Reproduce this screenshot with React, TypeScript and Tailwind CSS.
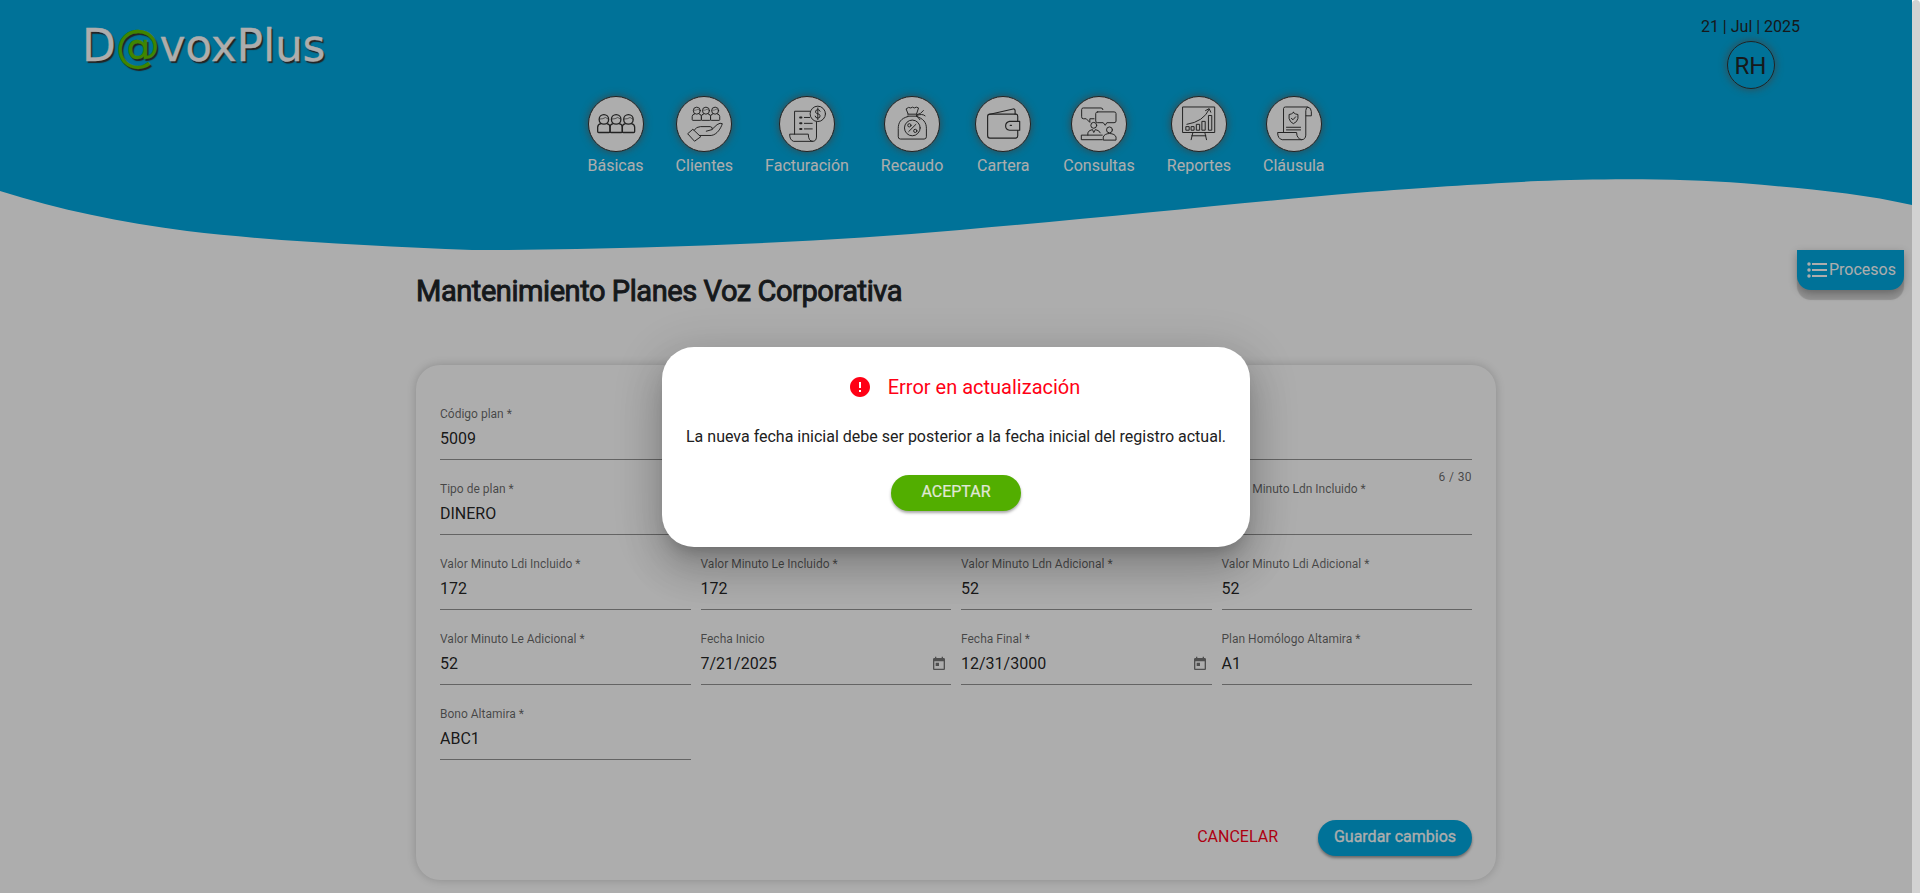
import React from 'react';

type NavEntry = { label: string; icon: React.ReactNode };
type FieldData = { label?: string; value?: string; date?: boolean; span?: string; hint?: string };

function Person({ x, y, s }: { x: number; y: number; s: number }) {
  return (
    <g transform={`translate(${x} ${y}) scale(${s})`}>
      <circle cx="0" cy="-1" r="14.500" />
      <path strokeWidth="2" d="M-13 -2 Q-2 -2 5 -7 L13 -2" />
      <path d="M-9 12 Q-19 14 -19 23 V36 Q-19 39 -16 39 H16 Q19 39 19 36 V23 Q19 14 9 12" />
    </g>
  );
}

const basicas = (
  <g strokeWidth="4">
    <Person x={47} y={71} s={1} />
    <Person x={84.500} y={71} s={1} />
    <Person x={122} y={71} s={1} />
  </g>
);

const clientes = (
  <g>
    <g strokeWidth="4">
      <Person x={62} y={44} s={0.74} />
      <Person x={90} y={44} s={0.74} />
      <Person x={118} y={44} s={0.74} />
    </g>
    <path d="M35 113 L50 100 L74 123 L56 136 Z" />
    <path d="M54 103 Q60 92 73 92 H103 Q112 94 109 101 L91 106" />
    <path d="M110 99 L124 86 Q134 79 140 83 C136 96 124 117 106 119 H70" />
  </g>
);

const facturacion = (
  <g>
    <path d="M46 115 V45 H92" />
    <path d="M113 78 V124 Q112 137 101 137 H43 Q31 133 31 115 H88 Q88 137 101 137" />
    <circle cx="117" cy="53" r="23.500" />
    <path d="M124 45 Q122 40 117 40 Q109 41 110 48 C111 54 124 51 124 59 Q124 66 117 66 Q110 66 109 60 M117 35 V71" />
    <path d="M76 64 H92 M76 82 H100 M76 99 H100" />
    <path strokeWidth="6" d="M63 64 h4 M63 82 h4 M63 99 h4" />
  </g>
);

const recaudo = (
  <g>
    <path d="M72 53 L66 38 Q74 30 80 35 Q86 30 91 35 Q97 30 104 35 L98 53" />
    <path d="M71 54 H98 M71 60 H98 M98 56 Q112 54 119 43 M98 58 Q116 51 124 59 M98 58 L108 71" />
    <path d="M72 61 C49 67 42 80 42 98 V123 Q42 130 49 130 H121 Q128 130 128 123 V97 C128 80 119 67 98 61" />
    <circle cx="85" cy="96" r="24" />
    <path d="M96 85 L74 107" />
    <circle cx="76" cy="88" r="5" />
    <circle cx="94" cy="105" r="5" />
  </g>
);

const cartera = (
  <g strokeWidth="3.500">
    <path d="M41 55 L115 38 Q120 37 121 43 V54" />
    <path d="M129 76 V60 Q129 54 123 54 H44 Q37 54 37 61 V119 Q37 127 44 127 H123 Q129 126 129 120 V104" />
    <path d="M135 76 H104 Q92 79 92 90 Q92 101 104 103 H135 Z" />
    <path d="M106 88 h4" />
  </g>
);

const consultas = (
  <g>
    <path d="M96 40 Q96 35 90 35 H36 Q31 35 31 40 V62 Q31 68 36 68 H45 L56 79 V68 H69" />
    <path d="M80 47 H130 Q136 47 136 52 V75 Q136 80 130 80 H108 L103 88 L97 80 H80 Q74 80 74 75 V52 Q74 47 80 47 Z" />
    <circle cx="68" cy="88" r="9" />
    <path d="M50 118 V111 Q52 103 64 101 L68 110 L73 101 Q85 103 88 111" />
    <circle cx="116" cy="102" r="9" />
    <path d="M97 132 V124 Q100 114 116 113 Q133 114 136 124 V132 Z" />
    <path d="M94 118 H30 V132 H94" />
  </g>
);

const reportes = (
  <g>
    <path d="M35 32 H132 V110 H35 Z" />
    <path d="M45 92 h9 v11 h-9 Z M61 92 h8 v11 h-8 Z M77 85 h9 v18 h-9 Z M94 76 h9 v27 h-9 Z M114 58 h9 v45 h-9 Z" />
    <path d="M47 85 Q98 77 115 39 M104 43 L115 37 L120 48" />
    <path d="M65 111 L60 132 M102 111 L107 132 M62 120 H105" />
  </g>
);

const clausula = (
  <g>
    <path d="M52 109 V37 Q52 32 58 32 H125 Q137 34 137 46 V59 H120 V43 Q121 32 126 32" />
    <path d="M120 59 V118 Q119 132 107 132 H48 Q34 129 34 110 H92 Q92 129 107 132" />
    <path d="M82 49 Q89 55 96 55 V67 Q94 78 82 83 Q71 78 69 67 V55 Q76 55 82 49 Z" />
    <path d="M76 67 L81 71 L89 62" />
    <path d="M61 94 H104 M61 102 H104" />
  </g>
);

const nav: NavEntry[] = [
  { label: 'Básicas', icon: basicas },
  { label: 'Clientes', icon: clientes },
  { label: 'Facturación', icon: facturacion },
  { label: 'Recaudo', icon: recaudo },
  { label: 'Cartera', icon: cartera },
  { label: 'Consultas', icon: consultas },
  { label: 'Reportes', icon: reportes },
  { label: 'Cláusula', icon: clausula },
];

const fields: FieldData[] = [
  { label: 'Código plan *', value: '5009' },
  { span: 'col-span-3', hint: '6 / 30' },
  { label: 'Tipo de plan *', value: 'DINERO' },
  {},
  {},
  { label: 'Valor Minuto Ldn Incluido *' },
  { label: 'Valor Minuto Ldi Incluido *', value: '172' },
  { label: 'Valor Minuto Le Incluido *', value: '172' },
  { label: 'Valor Minuto Ldn Adicional *', value: '52' },
  { label: 'Valor Minuto Ldi Adicional *', value: '52' },
  { label: 'Valor Minuto Le Adicional *', value: '52' },
  { label: 'Fecha Inicio', value: '7/21/2025', date: true },
  { label: 'Fecha Final *', value: '12/31/3000', date: true },
  { label: 'Plan Homólogo Altamira *', value: 'A1' },
  { label: 'Bono Altamira *', value: 'ABC1' },
];

function Field({ label, value, date, span, hint }: FieldData) {
  return (
    <div className={`h-[75px] ${span ?? ''}`}>
      <div className="flex h-[55px] flex-col border-b border-[#949494]">
        <span className="h-5 text-xs leading-[18px] text-black/60">{label}</span>
        <div className="flex h-7 items-center justify-between pr-1">
          <span className="text-base leading-7 text-black/87">{value}</span>
          {date && (
            <svg className="size-4 fill-[#757575]" viewBox="0 0 24 24">
              <path d="M19 3h-1V1h-2v2H8V1H6v2H5c-1.110 0-1.990.9-1.990 2L3 19c0 1.100.89 2 2 2h14c1.100 0 2-.9 2-2V5c0-1.100-.9-2-2-2zm0 16H5V8h14v11zM7 10h5v5H7z" />
            </svg>
          )}
        </div>
      </div>
      {hint && <div className="pt-[7px] text-right text-xs leading-5 tracking-[0.4px] text-black/60">{hint}</div>}
    </div>
  );
}

function Header() {
  return (
    <header className="relative h-[250px]">
      <svg className="absolute inset-0 h-[250px] w-full" viewBox="0 0 1912 250" preserveAspectRatio="none">
        <path
          fill="#00a9e0"
          d="M0 0 H1912 V205 C1860 193 1800 188 1744 183.300 C1680 178 1600 178.500 1538 181 C1480 184 1430 187 1358 192.700 C1250 202 1100 218 960 230 C820 242 680 248 505 250 H472 C380 246 280 242 187 231 C120 222 60 210 0 191 Z"
        />
      </svg>
      <div className="relative flex h-[92px] justify-between pr-[111px] pl-[82px]">
        <div className="pt-5 font-['DejaVu_Sans',sans-serif] text-[44px] leading-[52px] tracking-[-0.2px] text-white [text-shadow:1.5px_1.5px_1px_#333] [-webkit-text-stroke:0.3px]">
          D<span className="text-[#5fc400]">@</span>voxPlus
        </div>
        <div className="flex w-[101px] flex-col items-center pt-[15px]">
          <span className="text-base leading-6 whitespace-nowrap text-[#212529]">21 | Jul | 2025</span>
          <div className="mt-0.5 flex size-12 shrink-0 items-center justify-center rounded-full border border-[#333] pt-0.5 text-2xl text-[#212529] shadow-[0_0_8px_rgba(130,80,60,0.7)]">
            RH
          </div>
        </div>
      </div>
      <nav className="relative flex justify-center gap-8 pt-1">
        {nav.map((item) => (
          <a key={item.label} className="flex flex-col items-center">
            <span className="size-14 rounded-full border border-[#333] bg-white shadow-[0_0_8px_rgba(130,80,60,0.7)]">
              <svg
                viewBox="1.500 1.500 165 165"
                className="size-full fill-none stroke-[#333]"
                strokeWidth="3"
                strokeLinejoin="round"
                strokeLinecap="round"
              >
                {item.icon}
              </svg>
            </span>
            <span className="text-base leading-[27px] text-white">{item.label}</span>
          </a>
        ))}
      </nav>
    </header>
  );
}

function Procesos() {
  return (
    <button className="absolute top-[250px] right-2 flex h-10 w-[107px] items-center justify-center rounded-b-[14px] bg-[#00a9e0] pl-0.5 text-base text-white shadow-[0_10px_1px_0_rgba(0,0,0,0.16),0_3px_8px_rgba(0,0,0,0.3)]">
      <svg className="mr-0.5 h-4 w-5 fill-none stroke-white" viewBox="0 0 20 16">
        <path strokeWidth="2" d="M5 2 H20 M5 8 H20 M5 14 H20" />
        <path strokeWidth="3.500" strokeLinecap="round" d="M2 2 h0.010 M2 8 h0.010 M2 14 h0.010" />
      </svg>
      Procesos
    </button>
  );
}

export default function App() {
  return (
    <div className="flex h-[893px] w-[1920px] overflow-hidden bg-white font-[Roboto,sans-serif]">
      <div className="relative w-[1912px] overflow-hidden">
        <Header />
        <Procesos />
        <main className="mx-auto w-[1080px]">
          <h1 className="h-[115px] pt-5 text-[29px] leading-[42px] tracking-[-0.43px] text-[#212529] [-webkit-text-stroke:0.9px_#212529]">
            Mantenimiento Planes Voz Corporativa
          </h1>
          <section className="flex h-[515px] flex-col justify-between rounded-3xl bg-white px-6 pt-10 pb-6 shadow-[0_0_10px_rgba(0,0,0,0.2)]">
            <div className="grid grid-cols-4 gap-x-2.5">
              {fields.map((field, index) => (
                <Field key={index} {...field} />
              ))}
            </div>
            <div className="flex justify-end gap-10">
              <button className="pb-0.5 text-base text-[#ff0019]">CANCELAR</button>
              <button className="h-9 w-[154px] rounded-[18px] bg-[#00a9e0] pb-0.5 text-base text-white shadow-[0_2px_3px_rgba(0,0,0,0.4)] [-webkit-text-stroke:0.3px_white]">
                Guardar cambios
              </button>
            </div>
          </section>
        </main>
        <div className="absolute inset-0 flex items-center justify-center bg-black/32">
          <div className="mt-px flex h-[200px] w-[588px] flex-col items-center rounded-[32px] bg-white pt-7 shadow-[0_11px_15px_-7px_rgba(0,0,0,0.2),0_24px_38px_3px_rgba(0,0,0,0.14),0_9px_46px_8px_rgba(0,0,0,0.12)]">
            <div className="flex h-6 items-center pl-4 text-xl text-[#ff0015]">
              <svg className="mr-4 size-6 fill-current" viewBox="0 0 24 24">
                <path d="M12 2C6.480 2 2 6.480 2 12s4.480 10 10 10 10-4.480 10-10S17.520 2 12 2zm1 15h-2v-2h2v2zm0-4h-2V7h2v6z" />
              </svg>
              Error en actualización
            </div>
            <p className="mt-[26px] text-base leading-6 whitespace-nowrap text-[#212121]">
              La nueva fecha inicial debe ser posterior a la fecha inicial del registro actual.
            </p>
            <button className="mt-[26px] h-9 w-[130px] rounded-[18px] bg-[#52ae00] pb-0.5 text-base text-[#e0e8d8] shadow-[0_2px_3px_rgba(0,0,0,0.35)] [-webkit-text-stroke:0.2px]">
              ACEPTAR
            </button>
          </div>
        </div>
      </div>
      <div className="w-2 bg-white">
        <div className="h-full rounded-t bg-[#d2d2d2]" />
      </div>
    </div>
  );
}
